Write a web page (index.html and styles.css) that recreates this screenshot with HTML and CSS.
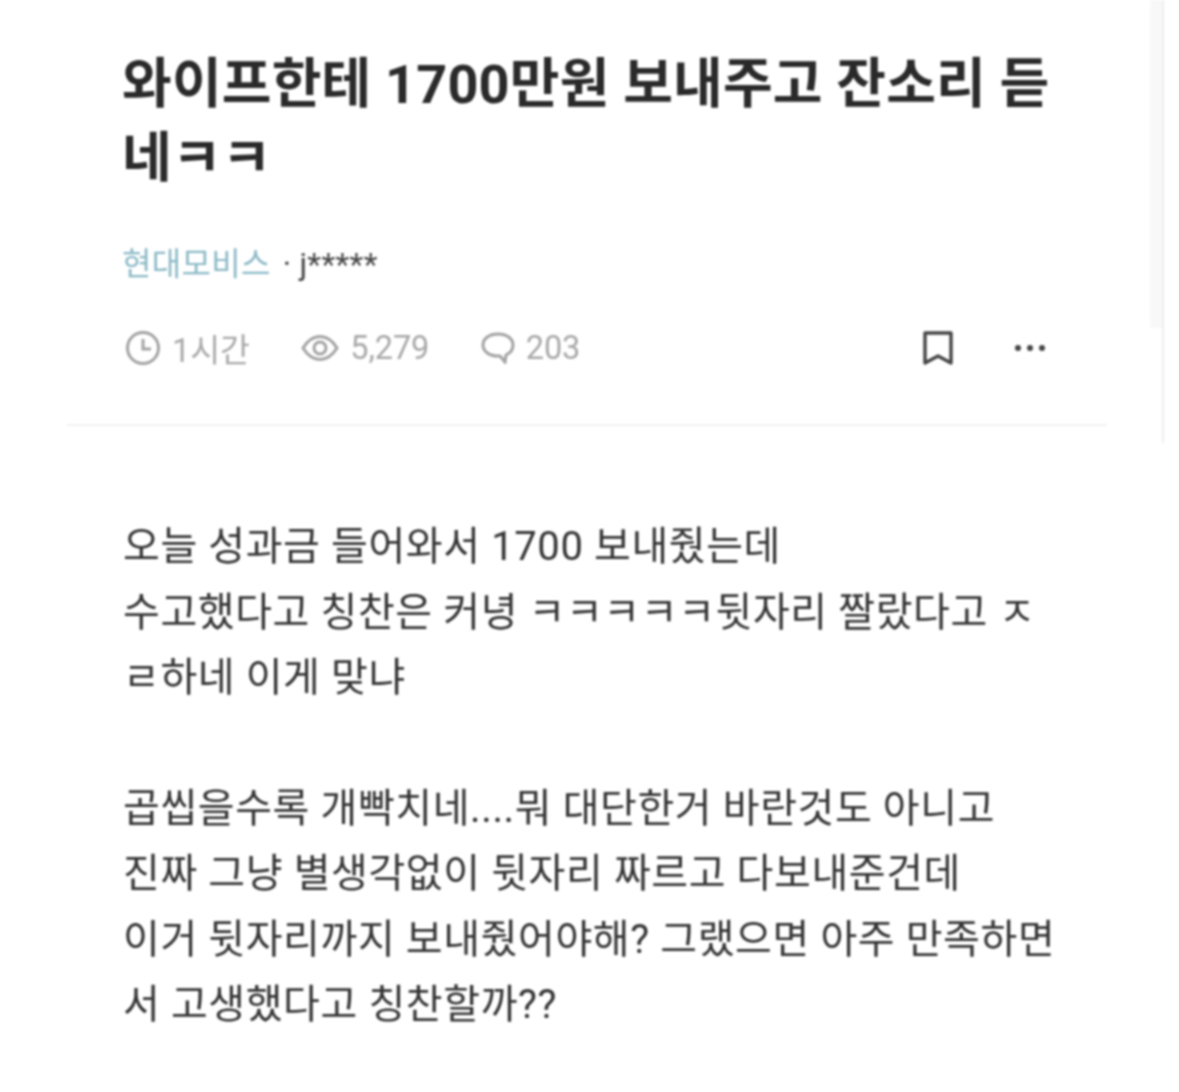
FILE: index.html
```html
<!DOCTYPE html>
<html lang="ko">
<head>
<meta charset="utf-8">
<title>와이프한테 1700만원 보내주고 잔소리 듣네ㅋㅋ</title>
<link rel="stylesheet" href="styles.css">
</head>
<body>
<div class="side-rule"><div class="side-shade"></div></div>
<article class="post">
  <header class="head">
    <h1 class="title">와이프한테 1700만원 보내주고 잔소리 듣네ㅋㅋ</h1>
    <p class="author"><span class="company">현대모비스</span><span class="dot">·</span>j*****</p>
    <div class="meta">
      <span class="stat stat-time">
        <svg class="icon" width="36" height="36" viewBox="0 0 36 36" fill="none" stroke="#a3a3a3" stroke-width="3"><circle cx="18" cy="18" r="15.500"/><path d="M18 9v10h8"/></svg>
        1시간
      </span>
      <span class="stat stat-views">
        <svg class="icon" width="38" height="28" viewBox="0 0 38 28" fill="none" stroke="#a3a3a3" stroke-width="3"><path d="M2 14C7 6 12 2.500 19 2.500S31 6 36 14c-5 8-10 11.500-17 11.500S7 22 2 14z"/><circle cx="19" cy="14" r="6"/></svg>
        5,279
      </span>
      <span class="stat stat-comments">
        <svg class="icon" width="34" height="32" viewBox="0 0 34 32" fill="none" stroke="#a3a3a3" stroke-width="3"><path d="M17 2C8.500 2 2 6.500 2 13s6.500 11 15 11h2l5 6 1-7c4.500-2 7-5.500 7-10C32 6.500 25.500 2 17 2z"/></svg>
        203
      </span>
      <span class="actions">
        <svg width="32" height="36" viewBox="0 0 32 36" fill="none" stroke="#444" stroke-width="3.400" stroke-linejoin="round"><path d="M3 3h26v30l-13-7-13 7z"/></svg>
        <svg width="32" height="8" viewBox="0 0 32 8" fill="#444"><circle cx="4" cy="4" r="3"/><circle cx="16" cy="4" r="3"/><circle cx="28" cy="4" r="3"/></svg>
      </span>
    </div>
  </header>
  <div class="body">
    <p>오늘 성과금 들어와서 1700 보내줬는데<br>수고했다고 칭찬은 커녕 ㅋㅋㅋㅋㅋ뒷자리 짤랐다고 ㅈ<br>ㄹ하네 이게 맞냐</p>
    <p>곱씹을수록 개빡치네....뭐 대단한거 바란것도 아니고<br>진짜 그냥 별생각없이 뒷자리 짜르고 다보내준건데<br>이거 뒷자리까지 보내줬어야해? 그랬으면 아주 만족하면<br>서 고생했다고 칭찬할까??</p>
  </div>
</article>
</body>
</html>
```
FILE: styles.css
```css
* { box-sizing: border-box; }
html, body { margin: 0; padding: 0; background: #fff; }
body {
  width: 1179px;
  height: 1092px;
  overflow: hidden;
  position: relative;
  font-family: Roboto, "Noto Sans CJK KR", sans-serif;
  filter: blur(0.8px);
}
.side-rule {
  position: absolute;
  left: 1150px;
  top: 0;
  width: 14px;
  height: 443px;
  border-right: 2px solid #eeeeee;
}
.side-shade { height: 328px; background: #f8f8f8; }
.post { margin-left: 67px; width: 1040px; }
.head {
  padding: 48px 55px 0;
  height: 426px;
  border-bottom: 2px solid #f2f2f2;
}
.title {
  margin: 0;
  font-size: 54px;
  line-height: 74px;
  font-weight: 700;
  color: #2a2a2a;
  letter-spacing: 0.2px;
}
.author { margin: 46px 0 0; font-size: 32px; line-height: 44px; color: #444; letter-spacing: 0.3px; }
.company { color: #8bb9c6; }
.dot { margin: 0 8px 0 12px; }
.meta { display: flex; align-items: center; margin-top: 38px; font-size: 32.500px; color: #a8a8a8; }
.stat { display: inline-flex; align-items: center; gap: 11px; margin-right: 51.500px; letter-spacing: -0.1px; }
.stat-time { margin-left: 3px; }
.actions { margin-left: auto; display: flex; align-items: center; gap: 60px; padding-right: 6px; }
.body { padding: 88px 56px 0; font-size: 40px; line-height: 65.500px; color: #333; }
.body p { margin: 0 0 65px; letter-spacing: 0.6px; white-space: nowrap; }
```
